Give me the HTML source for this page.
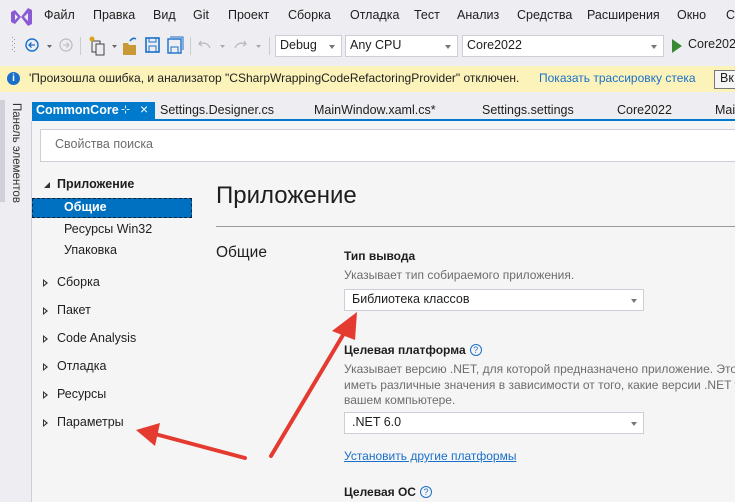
<!DOCTYPE html>
<html><head><meta charset="utf-8"><style>
*{margin:0;padding:0;box-sizing:border-box}
body{width:735px;height:502px;overflow:hidden;background:#eeeef2;font-family:"Segoe UI","Liberation Sans","DejaVu Sans",sans-serif;font-size:12px;color:#1e1e1e;position:relative}
.a{position:absolute;white-space:nowrap}
.menu span{position:absolute;top:8px;font-size:12.5px}
.dd{position:absolute;background:#fff;border:1px solid #ccced8;height:22px;top:35px;font-size:12.5px;padding:2px 4px}
.dd:after{content:"";position:absolute;right:6px;top:9px;border:3.5px solid transparent;border-top:4px solid #777}
.tab{position:absolute;top:103px;font-size:12.5px}
.tree{position:absolute;font-size:12.5px}
.tri{position:absolute;width:0;height:0;border-top:4px solid transparent;border-bottom:4px solid transparent;border-left:5px solid #333}
.tri:after{content:"";position:absolute;left:-4px;top:-2px;border-top:2px solid transparent;border-bottom:2px solid transparent;border-left:2.5px solid #f5f5f5}
.box{position:absolute;background:#fff;border:1px solid #ccced8;height:22px;font-size:12.5px;padding:2px 7px;left:344px;width:300px}
.box:after{content:"";position:absolute;right:6px;top:9px;border:3.5px solid transparent;border-top:4px solid #777}
.q{display:inline-block;width:12px;height:12px;border:1px solid #1a6fc9;border-radius:50%;font-size:9px;color:#1a6fc9;text-align:center;line-height:10px;font-weight:normal;margin-left:4px;vertical-align:1px}
</style></head><body>
<svg class="a" style="left:9px;top:6px" width="24" height="22" viewBox="0 0 24 22"><path d="M2 6 L6 4 L12 11 L6 18 L2 16 Z M12 11 L19 2 L23 4 V18 L19 20 Z" fill="#8a5bd4"/><path d="M6 8 L9 11 L6 14Z M19 7 V15 L15 11Z" fill="#eeeef2"/></svg>
<div class="menu">
<span style="left:44px">Файл</span><span style="left:93px">Правка</span><span style="left:153px">Вид</span><span style="left:193px">Git</span><span style="left:228px">Проект</span><span style="left:288px">Сборка</span><span style="left:350px">Отладка</span><span style="left:414px">Тест</span><span style="left:457px">Анализ</span><span style="left:517px">Средства</span><span style="left:587px">Расширения</span><span style="left:677px">Окно</span><span style="left:726px">С</span>
</div>
<svg class="a" style="left:0;top:34px" width="275" height="24">
<g fill="#999"><rect x="12" y="3" width="1" height="1"/><rect x="14" y="5" width="1" height="1"/><rect x="12" y="7" width="1" height="1"/><rect x="14" y="9" width="1" height="1"/><rect x="12" y="11" width="1" height="1"/><rect x="14" y="13" width="1" height="1"/><rect x="12" y="15" width="1" height="1"/><rect x="14" y="17" width="1" height="1"/></g>
<circle cx="32" cy="11" r="6" fill="none" stroke="#1a6fc9" stroke-width="1.4"/><path d="M35 11H29M31.5 8.5L29 11L31.5 13.5" stroke="#1a6fc9" fill="none" stroke-width="1.3"/>
<path d="M47 11h5l-2.5 3z" fill="#666"/>
<circle cx="66" cy="11" r="6" fill="none" stroke="#bbb" stroke-width="1.2"/><path d="M63 11H69M66.5 8.5L69 11L66.5 13.5" stroke="#bbb" fill="none"/>
<rect x="80" y="3" width="1" height="18" fill="#ccc"/>
<rect x="92" y="7" width="8" height="11" fill="none" stroke="#444"/><rect x="96" y="10" width="8" height="11" fill="#eeeef2" stroke="#444"/><circle cx="92" cy="5" r="2.5" fill="#d9a31c"/>
<path d="M112 11h5l-2.5 3z" fill="#666"/>
<path d="M123 9h5l1 2h7v10h-13z" fill="#c79a36"/><path d="M130 7q3-4 6-2" stroke="#1a6fc9" fill="none" stroke-width="1.5"/>
<rect x="146" y="4" width="13" height="14" fill="none" stroke="#1a6fc9" stroke-width="1.6"/><rect x="149" y="4" width="7" height="4" fill="none" stroke="#1a6fc9"/><rect x="149" y="12" width="7" height="6" fill="none" stroke="#1a6fc9"/>
<rect x="168" y="5" width="13" height="14" fill="none" stroke="#1a6fc9" stroke-width="1.4"/><rect x="171" y="13" width="7" height="6" fill="none" stroke="#1a6fc9"/><path d="M170 3h13v13" stroke="#1a6fc9" fill="none"/>
<rect x="190" y="3" width="1" height="18" fill="#ccc"/>
<path d="M201 7l-2 3 3 2M199 10q8-3 11 4" stroke="#bbb" fill="none" stroke-width="1.3"/>
<path d="M220 11h5l-2.5 3z" fill="#aaa"/>
<path d="M244 7l2 3-3 2M246 10q-8-3-11 4" stroke="#bbb" fill="none" stroke-width="1.3"/>
<path d="M256 11h5l-2.5 3z" fill="#aaa"/>
<rect x="269" y="3" width="1" height="18" fill="#ccc"/>
</svg>
<div class="dd" style="left:275px;width:67px">Debug</div>
<div class="dd" style="left:345px;width:113px">Any CPU</div>
<div class="dd" style="left:462px;width:202px">Core2022</div>
<svg class="a" style="left:672px;top:39px" width="10" height="14"><path d="M0 0L10 7L0 14z" fill="#388a34"/></svg>
<div class="a" style="left:688px;top:37px;font-size:12.5px">Core2022</div>
<div class="a" style="left:0;top:66px;width:735px;height:26px;background:#fcf3bb"></div>
<div class="a" style="left:7px;top:72px;width:13px;height:13px;border-radius:50%;background:#1a6fc9;color:#fff;font-size:10px;font-weight:bold;text-align:center;line-height:13px">i</div>
<div class="a" style="left:29px;top:71px;font-size:12px">'Произошла ошибка, и анализатор "CSharpWrappingCodeRefactoringProvider" отключен.</div>
<div class="a" style="left:539px;top:71px;font-size:12px;color:#1a6fc9">Показать трассировку стека</div>
<div class="a" style="left:714px;top:70px;width:30px;height:19px;border:1px solid #777;background:#f5f5f5;font-size:12.5px;padding-left:5px">Вк</div>
<div class="a" style="left:0;top:100px;width:5px;height:102px;background:#cfd0da"></div>
<div class="a" style="left:22px;top:103px;transform-origin:0 0;transform:rotate(90deg);font-size:11.5px;color:#333">Панель элементов</div>
<div class="a" style="left:32px;top:102px;width:123px;height:18px;background:#007acc"></div>
<div class="a" style="left:36px;top:103px;font-size:12.5px;color:#fff;font-weight:bold">CommonCore</div>
<div class="a" style="left:121px;top:103px;font-size:11px;color:#fff">⊹</div>
<div class="a" style="left:140px;top:101px;font-size:14px;color:#fff">×</div>
<div class="tab" style="left:160px">Settings.Designer.cs</div>
<div class="tab" style="left:314px">MainWindow.xaml.cs*</div>
<div class="tab" style="left:482px">Settings.settings</div>
<div class="tab" style="left:617px">Core2022</div>
<div class="tab" style="left:715px">Mai</div>
<div class="a" style="left:32px;top:119px;width:703px;height:2px;background:#007acc"></div>
<div class="a" style="left:31px;top:121px;width:704px;height:381px;background:#f5f5f5;border-left:1px solid #ccced8"></div>
<div class="a" style="left:40px;top:129px;width:700px;height:33px;background:#fff;border:1px solid #ccced8"></div>
<div class="a" style="left:55px;top:137px;font-size:12.5px;color:#6d6d6d">Свойства поиска</div>
<svg class="a" style="left:43px;top:181px" width="8" height="8"><path d="M7 1V7H1z" fill="#333"/></svg>
<div class="tree" style="left:57px;top:177px;font-weight:bold">Приложение</div>
<div class="a" style="left:32px;top:198px;width:160px;height:20px;background:#0070c0;border:1px dashed #123"></div>
<div class="tree" style="left:64px;top:200px;font-weight:bold;color:#fff">Общие</div>
<div class="tree" style="left:64px;top:222px">Ресурсы Win32</div>
<div class="tree" style="left:64px;top:243px">Упаковка</div>
<div class="tri" style="left:43px;top:279px"></div><div class="tree" style="left:57px;top:275px">Сборка</div>
<div class="tri" style="left:43px;top:307px"></div><div class="tree" style="left:57px;top:303px">Пакет</div>
<div class="tri" style="left:43px;top:335px"></div><div class="tree" style="left:57px;top:331px">Code Analysis</div>
<div class="tri" style="left:43px;top:363px"></div><div class="tree" style="left:57px;top:359px">Отладка</div>
<div class="tri" style="left:43px;top:391px"></div><div class="tree" style="left:57px;top:387px">Ресурсы</div>
<div class="tri" style="left:43px;top:419px"></div><div class="tree" style="left:57px;top:415px">Параметры</div>
<div class="a" style="left:216px;top:182px;font-size:24px;color:#1e1e1e">Приложение</div>
<div class="a" style="left:216px;top:226px;width:519px;height:1px;background:#999"></div>
<div class="a" style="left:216px;top:244px;font-size:15.5px">Общие</div>
<div class="a" style="left:344px;top:249px;font-weight:bold;font-size:12px">Тип вывода</div>
<div class="a" style="left:344px;top:268px;color:#6d6d6d">Указывает тип собираемого приложения.</div>
<div class="box" style="top:289px">Библиотека классов</div>
<div class="a" style="left:344px;top:343px;font-weight:bold">Целевая платформа<span class="q">?</span></div>
<div class="a" style="left:344px;top:362px;color:#6d6d6d;line-height:15.5px">Указывает версию .NET, для которой предназначено приложение. Этот<br>иметь различные значения в зависимости от того, какие версии .NET у<br>вашем компьютере.</div>
<div class="box" style="top:412px">.NET 6.0</div>
<div class="a" style="left:344px;top:449px;color:#1a6fc9;text-decoration:underline">Установить другие платформы</div>
<div class="a" style="left:344px;top:485px;font-weight:bold">Целевая ОС<span class="q">?</span></div>
<svg class="a" style="left:0;top:0" width="735" height="502">
<path d="M271 456L346 330" stroke="#e53a30" stroke-width="4" stroke-linecap="round"/>
<path d="M357 312L332 331L355 340z" fill="#e53a30"/>
<path d="M245 458L155 434" stroke="#e53a30" stroke-width="4" stroke-linecap="round"/>
<path d="M136 430L160 423L155 446z" fill="#e53a30"/>
</svg>
</body></html>
